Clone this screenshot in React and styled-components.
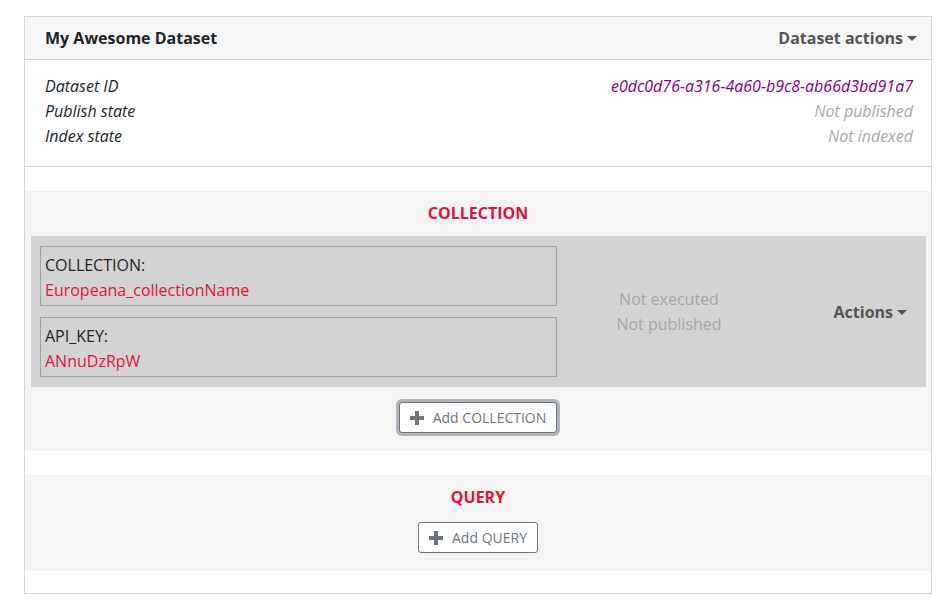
import styled, { createGlobalStyle } from "styled-components";

const Global = createGlobalStyle`
    body {
        margin: 0;
        background: #FFFFFF;
        font-family: 'Open Sans', 'Noto Sans', sans-serif;
        font-size: 16px;
        color: #212529;
    }
    * { box-sizing: border-box; }
`

const collectionParams = [
    { name: "COLLECTION:", value: "Europeana_collectionName" },
    { name: "API_KEY:", value: "ANnuDzRpW" },
];

function Caret() {
    return <CaretMark />
}

function Plus() {
    return (
        <svg width="14" height="14" viewBox="0 0 14 14">
            <path d="M5 0h4v5h5v4H9v5H5V9H0V5h5z" fill="#6c757d" />
        </svg>
    )
}

export default function App(){
    return(
        <Page>
            <Global />
            <Card>
                <Header>
                    <Title>My Awesome Dataset</Title>
                    <Dropdown>Dataset actions <Caret /></Dropdown>
                </Header>
                <Info>
                    <InfoRow><span>Dataset ID</span><Value tone="id">e0dc0d76-a316-4a60-b9c8-ab66d3bd91a7</Value></InfoRow>
                    <InfoRow><span>Publish state</span><Value>Not published</Value></InfoRow>
                    <InfoRow><span>Index state</span><Value>Not indexed</Value></InfoRow>
                </Info>

                <Section>
                    <SectionTitle>COLLECTION</SectionTitle>
                    <Item>
                        <Params>
                            {collectionParams.map((p) => (
                                <Param key={p.name}>
                                    <ParamName>{p.name}</ParamName>
                                    <ParamValue>{p.value}</ParamValue>
                                </Param>
                            ))}
                        </Params>
                        <Status>
                            <div>Not executed</div>
                            <div>Not published</div>
                        </Status>
                        <ItemActions>Actions <Caret /></ItemActions>
                    </Item>
                    <AddButton focused><Plus /> Add COLLECTION</AddButton>
                </Section>

                <Section>
                    <SectionTitle>QUERY</SectionTitle>
                    <AddButton><Plus /> Add QUERY</AddButton>
                </Section>
            </Card>
        </Page>
    )
}

const Page = styled.main`
    width: 951px;
    padding: 16px 19px 14px 24px;
`
const Card = styled.section`
    width: 908px;
    border: 1px solid #d6d6d6;
    padding-bottom: 22px;
    background: #FFFFFF;
`
const Header = styled.header`
    display: flex;
    justify-content: space-between;
    align-items: center;
    height: 43px;
    padding: 0 14px 0 20px;
    background: #f7f7f7;
    border-bottom: 1px solid #d6d6d6;
`
const Title = styled.h1`
    margin: 0 0 1px;
    font-size: 16px;
    line-height: 24px;
    font-weight: 700;
    color: #212529;
`
const Dropdown = styled.div`
    display: flex;
    align-items: center;
    gap: 4px;
    margin-bottom: 1px;
    font-weight: 700;
    line-height: 24px;
    color: #555555;
`
const CaretMark = styled.span`
    display: inline-block;
    width: 0;
    height: 0;
    border-left: 5px solid transparent;
    border-right: 5px solid transparent;
    border-top: 5px solid #555555;
    margin-top: 1px;
`
const Info = styled.div`
    padding: 14px 18px 17px 20px;
    border-bottom: 1px solid #d6d6d6;
    font-style: italic;
`
const InfoRow = styled.div`
    display: flex;
    justify-content: space-between;
    line-height: 25px;
    color: #212529;
`
const Value = styled.span`
    color: ${(p) => (p.tone === "id" ? "#800080" : "#a8a8a8")};
`
const Section = styled.div`
    display: flex;
    flex-direction: column;
    align-items: center;
    margin-top: 24px;
    padding: 10px 0 18px;
    background: #f4f4f4;
`
const SectionTitle = styled.h2`
    margin: 0 0 13px;
    font-size: 16px;
    line-height: 24px;
    font-weight: 700;
    color: #dc143c;
`
const Item = styled.div`
    align-self: stretch;
    display: grid;
    grid-template-columns: 517px 224px 1fr;
    align-items: center;
    margin: -2px 5px 15px 6px;
    padding: 10px 9px;
    background: #d3d3d3;
`
const Params = styled.div`
    display: flex;
    flex-direction: column;
    gap: 11px;
`
const Param = styled.div`
    padding: 6px 4px 2px;
    border: 1px solid #a3a3a3;
    line-height: 25px;
`
const ParamName = styled.div`
    color: #212529;
`
const ParamValue = styled.div`
    color: #e0143c;
`
const Status = styled.div`
    text-align: center;
    line-height: 25px;
    color: #a6a6a6;
`
const ItemActions = styled.div`
    justify-self: end;
    display: flex;
    align-items: center;
    gap: 4px;
    margin-right: 10px;
    font-weight: 700;
    color: #555555;
`
const AddButton = styled.button`
    display: flex;
    align-items: center;
    gap: 9px;
    height: 31px;
    padding: 0 10px;
    background: #FFFFFF;
    border: 1px solid #6c757d;
    border-radius: 3px;
    font-family: 'Open Sans', 'Noto Sans', sans-serif;
    font-size: 14px;
    color: #6c757d;
    box-shadow: ${(p) => (p.focused ? "0 0 0 3px rgba(108, 117, 125, 0.5)" : "none")};
`
